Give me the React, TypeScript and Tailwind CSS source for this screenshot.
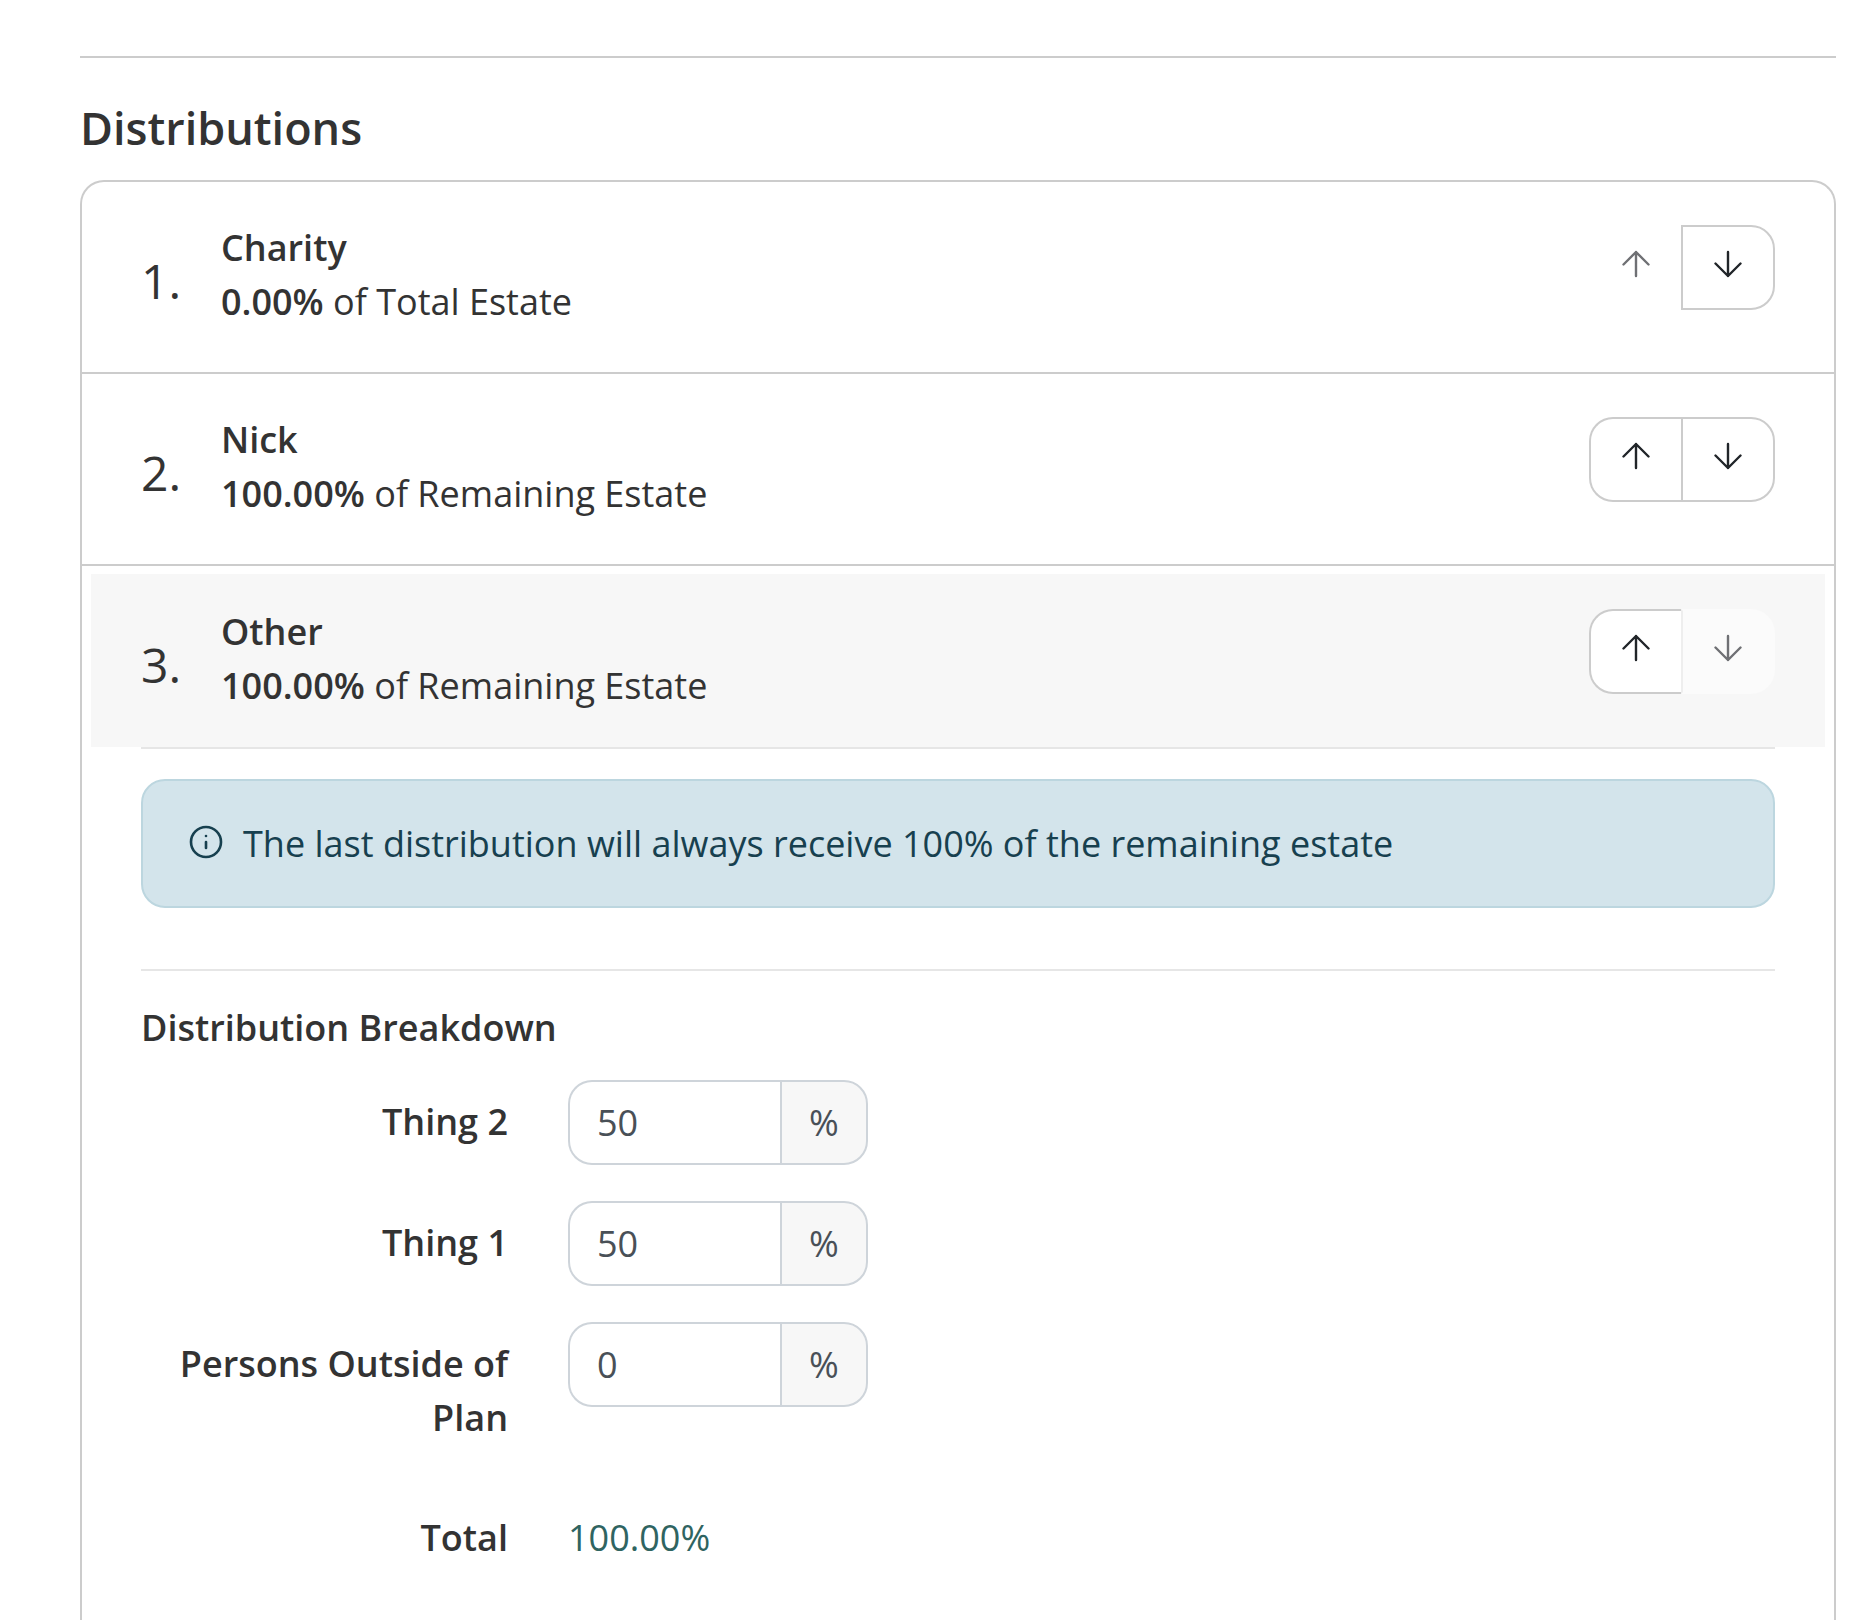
import { Info } from 'lucide-react'

const ROWS = [
  { num: '1.', name: 'Charity', pct: '0.00%', of: 'of Total Estate' },
  { num: '2.', name: 'Nick', pct: '100.00%', of: 'of Remaining Estate' },
  { num: '3.', name: 'Other', pct: '100.00%', of: 'of Remaining Estate' },
]

const BREAKDOWN = [
  { label: 'Thing 2', value: '50' },
  { label: 'Thing 1', value: '50' },
  { label: 'Persons Outside of Plan', value: '0' },
]

function Arrow({ dir, muted }: { dir: 'up' | 'down'; muted?: boolean }) {
  return (
    <svg width="28" height="28" viewBox="0 0 28 28" fill="none" stroke={muted ? '#6f7074' : '#212529'} strokeWidth="2.4" strokeLinecap="round" strokeLinejoin="round" className="-mt-[8px]">
      {dir === 'up' ? <path d="M14 26V2M1.5 14.5 14 2l12.5 12.5" /> : <path d="M14 2v24M1.5 13.5 14 26l12.5-12.5" />}
    </svg>
  )
}

function MoveButtons({ index }: { index: number }) {
  const first = index === 0
  const last = index === ROWS.length - 1
  return (
    <div className="flex h-[85px] mt-[5px]">
      <div className={`w-[92px] flex items-center justify-center rounded-l-[24px] border-2 border-r-0 ${first ? 'border-transparent' : 'border-[#cccccc] bg-white'}`}>
        <Arrow dir="up" muted={first} />
      </div>
      <div className={`w-[94px] flex items-center justify-center rounded-r-[24px] border-2 border-l-2 ${last ? 'border-transparent border-l-[#eeeeee] bg-[#fbfbfb]' : 'border-[#cccccc] bg-white'}`}>
        <Arrow dir="down" muted={last} />
      </div>
    </div>
  )
}

export default function App() {
  return (
    <div className="h-[1620px] overflow-hidden bg-white pl-[80px] pr-[20px] pt-[56px] text-[36px] leading-[54px] text-[#333333] font-['Open_Sans',sans-serif]">
      <div className="border-t-2 border-[#cccccc]" />
      <h2 className="mt-[39px] mb-[21px] text-[45px] leading-[62px] font-semibold">Distributions</h2>

      <div className="rounded-t-[24px] border-2 border-b-0 border-[#cccccc] h-[1600px]">
        {ROWS.map((row, i) => (
          <div key={row.name} className={i > 0 ? 'border-t-2 border-[#cccccc]' : ''}>
            <div className={`mx-[9px] mt-2 pl-[50px] pr-[50px] pt-[30px] flex items-start ${i === 2 ? 'h-[173px] bg-[#f7f7f7]' : 'h-[172px] mb-[10px]'}`}>
              <div className="w-[80px] pt-[25px] text-[48px] leading-[72px]">{row.num}</div>
              <div className="flex-1 pt-px">
                <div className="font-semibold">{row.name}</div>
                <div><span className="font-semibold">{row.pct}</span> {row.of}</div>
              </div>
              <MoveButtons index={i} />
            </div>
          </div>
        ))}

        <div className="mx-[59px] border-t-2 border-[#e6e6e6] pt-[30px]">
          <div className="h-[129px] flex items-center gap-[19px] rounded-[24px] border-2 border-[#bcd6df] bg-[#d3e4eb] pl-[45px] text-[#17404f]">
            <Info size={36} strokeWidth={1.75} className="-mt-[4px]" />
            <span>The last distribution will always receive 100% of the remaining estate</span>
          </div>

          <div className="mt-[61px] border-t-2 border-[#e6e6e6] pt-[30px]">
            <div className="font-semibold mb-[25px]">Distribution Breakdown</div>
            {BREAKDOWN.map(item => (
              <div key={item.label} className="grid grid-cols-[367px_300px] gap-x-[60px] mb-[36px]">
                <div className="pt-[15px] text-right font-semibold">{item.label}</div>
                <div className="flex h-[85px]">
                  <input
                    readOnly
                    value={item.value}
                    className="w-[212px] rounded-l-[24px] border-2 border-r-0 border-[#ced4da] bg-white pl-[27px] text-[#495057] outline-none"
                  />
                  <div className="flex-1 flex items-center justify-center rounded-r-[24px] border-2 border-[#ced4da] bg-[#f7f7f7] text-[#495057]">%</div>
                </div>
              </div>
            ))}
            <div className="grid grid-cols-[367px_300px] gap-x-[60px] pt-[30px]">
              <div className="text-right font-semibold">Total</div>
              <div className="text-[#2f6461]">100.00%</div>
            </div>
          </div>
        </div>
      </div>
    </div>
  )
}
